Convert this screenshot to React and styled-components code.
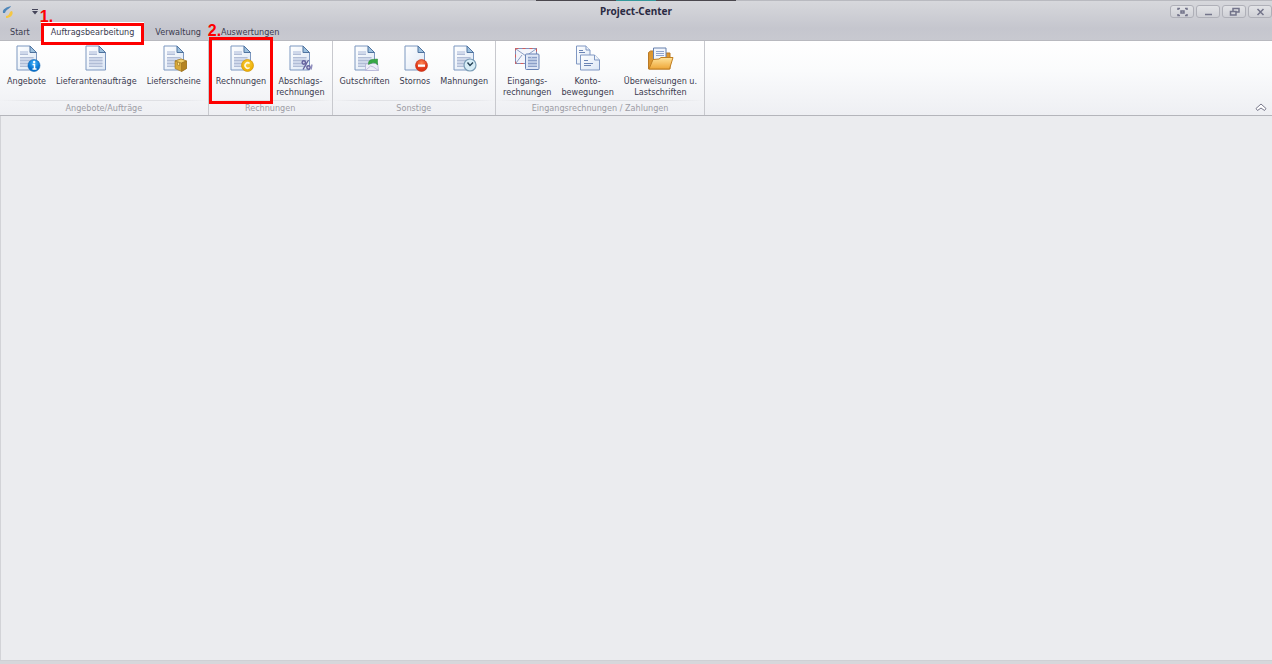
import React, { useState } from 'react';
import styled, { createGlobalStyle, css, ThemeProvider } from 'styled-components';

const theme = {
  text: '#3b3b4f',
  muted: '#9c9ca4',
  line: '#b4b5bb',
  mark: '#fe0000',
  workspace: '#ebecef',
};

const GlobalStyle = createGlobalStyle`
  html, body, #root {
    height: 100%;
    margin: 0;
  }

  * {
    box-sizing: border-box;
  }

  body, button {
    font-family: 'DejaVu Sans Condensed', 'DejaVu Sans', Tahoma, sans-serif;
    font-size: 9px;
    line-height: 11px;
    color: ${theme.text};
  }

  button {
    margin: 0;
    padding: 0;
    border: 0;
    background: none;
  }
`;

const Window = styled.div`
  display: flex;
  flex-direction: column;
  min-height: 100%;
  background: ${(props) => props.theme.workspace};
`;

const Header = styled.header`
  position: relative;
  border-top: 1px solid #b9bac0;
  border-bottom: 1px solid #b8b9bf;
  background: linear-gradient(#d7d8dc, #c5c6ce 70%, #c8c9d0);
`;

const TopStrip = styled.div`
  position: absolute;
  top: -1px;
  left: 50%;
  width: 200px;
  height: 1px;
  margin-left: -100px;
  background: linear-gradient(90deg, #4b484e 40%, #35999c 40%, #35999c 60%, #4b484e 60%);
`;

const TitleBar = styled.div`
  display: grid;
  grid-template-columns: 1fr auto 1fr;
  align-items: center;
  height: 21px;
`;

const QuickAccess = styled.div`
  display: flex;
  align-items: center;
  gap: 18px;
  padding-left: 2px;

  svg {
    display: block;
  }
`;

const Title = styled.h1`
  margin: 0;
  font-family: 'Noto Sans', sans-serif;
  font-size: 10px;
  font-weight: 700;
  color: #2b2b43;
`;

const WindowButtons = styled.div`
  display: flex;
  justify-content: flex-end;
  gap: 2px;
`;

const WindowButton = styled.button`
  display: flex;
  align-items: center;
  justify-content: center;
  width: 24px;
  height: 13px;
  border: 1px solid #afb0b8;
  border-radius: 3px;
  background: linear-gradient(#e2e3e6, #cfd0d6);
`;

const Tabs = styled.nav`
  display: flex;
  height: 18px;
`;

const Tab = styled.button`
  position: relative;
  padding: 2px 10px 0;

  ${(props) => props.$active && css`
    margin: 0 1px -1px;
    background: #fff;
  `}
`;

const Ribbon = styled.div`
  display: flex;
  height: 75px;
  border-bottom: 1px solid ${(props) => props.theme.line};
  background: linear-gradient(#fff, #fafbfc 40%, #eeeff3);
`;

const Group = styled.section`
  display: flex;
  flex-direction: column;
  border-right: 1px solid #c8c9ce;
`;

const Items = styled.div`
  display: flex;
  flex: 1;
  padding: 0 2px;
`;

const GroupName = styled.h2`
  margin: 0;
  padding-top: 2px;
  height: 15px;
  font-size: 9px;
  font-weight: 400;
  text-align: center;
  color: ${(props) => props.theme.muted};
  border-top: 1px solid;
  border-image: linear-gradient(90deg, transparent, #dfe0e4 20%, #dfe0e4 80%, transparent) 1;
`;

const Item = styled.button`
  position: relative;
  display: flex;
  flex-direction: column;
  align-items: center;
  gap: 4px;
  padding: 3px 5px 0;
  white-space: pre-line;
  text-align: center;

  svg {
    display: block;
  }
`;

const Marker = styled.span`
  position: absolute;
  z-index: 1;
  inset: ${(props) => props.$inset};
  border: 3px solid ${(props) => props.theme.mark};
  pointer-events: none;
`;

const MarkerNumber = styled.span`
  position: absolute;
  left: -4px;
  bottom: 100%;
  margin-bottom: 2px;
  font: 700 16px/14px 'Liberation Sans', Arial, sans-serif;
  color: ${(props) => props.theme.mark};
`;

const Collapse = styled.button`
  align-self: flex-end;
  margin: 0 5px 3px auto;

  svg {
    display: block;
  }
`;

const Workspace = styled.main`
  flex: 1;
  border-left: 1px solid #d2d3d7;
`;

const StatusBar = styled.footer`
  height: 4px;
  border-top: 1px solid #cfd0d4;
  background: #d6d7db;
`;

const Page = () => (
  <g>
    <path d="M4 2h13l6.500 6.500V26H4z" fill="url(#paper)" stroke="#7d98c0" />
    <path d="M17 2v6.500h6.500z" fill="#9cc0de" stroke="#4f739f" />
  </g>
);

const Lines = () => (
  <g>
    <path d="M7 7h8v4H7zM7 13h13.500v10H7z" fill="#cfd8ea" />
    <path d="M7 10.500h8M7 13.500h13.500M7 16.500h13.500M7 19.500h13.500M7 22.500h13.500" stroke="#b1bdd6" />
  </g>
);

const badges = {
  info: (
    <g>
      <circle cx="21" cy="21.500" r="6" fill="url(#blue)" stroke="#0b5fae" strokeWidth=".6" />
      <path d="M19.500 20.500h2v4.500m-2 0h4" stroke="#fff" strokeWidth="1.500" fill="none" />
      <circle cx="21.200" cy="18" r="1.200" fill="#fff" />
    </g>
  ),
  box: (
    <g stroke="#9a7220" strokeWidth=".6">
      <path d="m15 17 6-2 5.500 2v7.500l-5 3-6.500-3z" fill="#d8a93a" />
      <path d="m15 17 6.500 2 5-2-5.500-2z" fill="#f2d069" />
      <path d="M21.500 19v8.500l5-3V17z" fill="#b58422" />
      <path d="m17.500 18 2 .7v3l-2-.7z" fill="#ffe58c" />
    </g>
  ),
  coin: (
    <g>
      <circle cx="20.500" cy="21.500" r="6" fill="url(#gold)" stroke="#cf9206" strokeWidth=".7" />
      <path d="M22.600 19.500a2.700 2.700 0 1 0 0 4" stroke="#fff8dc" strokeWidth="1.600" fill="none" />
    </g>
  ),
  percent: (
    <g fill="none" stroke="#62609c" strokeWidth="1.400">
      <path d="m22.500 16-5.500 9.500" />
      <circle cx="17.800" cy="18.500" r="1.700" fill="#cfcee8" />
      <circle cx="22.500" cy="23.500" r="1.700" fill="#cfcee8" />
      <path d="m26 20.500-1 5" stroke="#8d8bbd" />
    </g>
  ),
  credit: (
    <g>
      <path d="m14.500 20 12-1 1 7.500h-13z" fill="#eeedf8" stroke="#b3b2d6" strokeWidth=".8" />
      <path d="m14.500 26.500 5-4.500 3 1 5 3.500" fill="none" stroke="#b3b2d6" strokeWidth=".8" />
      <path d="M17.500 20.500c-.5-3 1-4.500 3.500-5l5.500-.5v6l-2-2c-2-.5-4 0-7 1.500" fill="#37a845" stroke="#238334" strokeWidth=".5" />
    </g>
  ),
  stop: (
    <g>
      <circle cx="20.500" cy="21.500" r="6" fill="url(#red)" stroke="#bd2d12" strokeWidth=".6" />
      <rect x="17" y="20.500" width="7" height="2.300" fill="#fff" />
    </g>
  ),
  clock: (
    <g>
      <circle cx="20" cy="21" r="6" fill="#d7edf7" stroke="#7b9db6" strokeWidth="1.200" />
      <path d="m17.500 18.500 2.500 3 3-3" fill="none" stroke="#234055" strokeWidth="1.400" />
    </g>
  ),
};

const DocumentIcon = ({ badge, blank }) => (
  <svg width="28" height="28" viewBox="0 0 28 28" aria-hidden="true">
    <Page />
    {!blank && <Lines />}
    {badges[badge]}
  </svg>
);

const InvoiceInIcon = () => (
  <svg width="28" height="28" viewBox="0 0 28 28" aria-hidden="true">
    <rect x="2.500" y="4.500" width="21" height="15" fill="#f2f4fb" stroke="#7f90bb" />
    <path d="M2.500 4.500h21v15h-21z" fill="none" stroke="#d75d58" strokeDasharray="3 4" />
    <path d="m3 5 10 7L23 5M3 19l6-8" fill="none" stroke="#8c9fc4" />
    <rect x="12.500" y="10" width="13.500" height="15.500" rx="1" fill="#dfe7f6" stroke="#6681b4" />
    <rect x="15" y="12.500" width="9" height="10.500" fill="#bccae4" />
    <path d="M15 13.500h3m1 0h5m-9 3h9m-9 3h9m-9 3h9" stroke="#8b9fc8" />
  </svg>
);

const AccountIcon = () => (
  <svg width="28" height="28" viewBox="0 0 28 28" aria-hidden="true">
    <g fill="url(#paper)" stroke="#8098c3">
      <path d="M2.500 2h9.500l4 4v14H2.500z" />
      <path d="M12 2v4h4" />
      <path d="M6.500 11h14l5 5v10h-19z" />
      <path d="M20.500 11v5h5" />
    </g>
    <path d="M5 6.500h4m-4 2h6m-1 8h4m-4 3h9m-9 2h7" stroke="#6c85b5" />
  </svg>
);

const FolderIcon = () => (
  <svg width="28" height="28" viewBox="0 0 28 28" aria-hidden="true">
    <path d="M2.500 25V8.500l2-1.500h5l2 2H24v16z" fill="#dd9730" stroke="#b97a27" />
    <path d="M7.500 4h12.500v14H7.500z" fill="#f2f6fd" stroke="#6780ad" />
    <path d="M10 7.500h8m-8 2h8m-8 2h8" stroke="#91a5cc" />
    <path d="m7 15.500 6-.5 2-1.500h12L23.500 25H3z" fill="url(#folder)" stroke="#c18022" />
  </svg>
);

const Gradients = () => (
  <svg width="0" height="0" style={{ position: 'absolute' }} aria-hidden="true">
    <defs>
      <linearGradient id="paper" x2="1" y2="1">
        <stop stopColor="#fff" />
        <stop offset="1" stopColor="#dce7f5" />
      </linearGradient>
      <linearGradient id="folder" x2="0" y2="1">
        <stop stopColor="#ffe39a" />
        <stop offset="1" stopColor="#eea637" />
      </linearGradient>
      <radialGradient id="blue" cy=".3">
        <stop stopColor="#45b6ff" />
        <stop offset="1" stopColor="#0873ce" />
      </radialGradient>
      <radialGradient id="gold" cy=".35">
        <stop stopColor="#f9cf3a" />
        <stop offset="1" stopColor="#efb20a" />
      </radialGradient>
      <radialGradient id="red" cy=".3">
        <stop stopColor="#ff8552" />
        <stop offset="1" stopColor="#df3517" />
      </radialGradient>
    </defs>
  </svg>
);

const tabs = ['Start', 'Auftragsbearbeitung', 'Verwaltung', 'Auswertungen'];

const groups = [
  {
    name: 'Angebote/Aufträge',
    items: [
      { label: 'Angebote', icon: <DocumentIcon badge="info" /> },
      { label: 'Lieferantenaufträge', icon: <DocumentIcon /> },
      { label: 'Lieferscheine', icon: <DocumentIcon badge="box" /> },
    ],
  },
  {
    name: 'Rechnungen',
    items: [
      { label: 'Rechnungen', icon: <DocumentIcon badge="coin" />, step: '2.' },
      { label: 'Abschlags-\nrechnungen', icon: <DocumentIcon badge="percent" /> },
    ],
  },
  {
    name: 'Sonstige',
    items: [
      { label: 'Gutschriften', icon: <DocumentIcon badge="credit" /> },
      { label: 'Stornos', icon: <DocumentIcon badge="stop" blank /> },
      { label: 'Mahnungen', icon: <DocumentIcon badge="clock" /> },
    ],
  },
  {
    name: 'Eingangsrechnungen / Zahlungen',
    items: [
      { label: 'Eingangs-\nrechnungen', icon: <InvoiceInIcon /> },
      { label: 'Konto-\nbewegungen', icon: <AccountIcon /> },
      { label: 'Überweisungen u.\nLastschriften', icon: <FolderIcon /> },
    ],
  },
];

const windowButtons = [
  { label: 'Vollbild', path: 'M1 3V1.500h2m5 0h2V3m0 4v1.500H8m-5 0H1V7m3-3h3v2H4z' },
  { label: 'Minimieren', path: 'M2 7.500h7' },
  { label: 'Wiederherstellen', path: 'M4 4V1.500h6V5H7M1.500 4.500H7V8H1.500z' },
  { label: 'Schließen', path: 'm2.500 2 6 6m0-6-6 6' },
];

const App = () => {
  const [active, setActive] = useState('Auftragsbearbeitung');

  return (
    <ThemeProvider theme={theme}>
      <GlobalStyle />
      <Gradients />
      <Window>
        <Header>
          <TopStrip />
          <TitleBar>
            <QuickAccess>
              <svg width="11" height="12" viewBox="0 0 11 12" aria-hidden="true">
                <path d="M1 7C0 3 5 1 9 0 8 3 4 3 3 7z" fill="#4e86b9" />
                <path d="M4 10c4 0 3-5 6-5 2 3-1 7-6 7z" fill="#f5c743" />
              </svg>
              <button type="button" aria-label="Schnellzugriff">
                <svg width="8" height="6" viewBox="0 0 8 6">
                  <path d="M1 .500h6" stroke="#45455a" />
                  <path d="M1 2h6L4 5.500z" fill="#45455a" />
                </svg>
              </button>
            </QuickAccess>
            <Title>Project-Center</Title>
            <WindowButtons>
              {windowButtons.map((button) => (
                <WindowButton key={button.label} type="button" aria-label={button.label}>
                  <svg width="11" height="10" viewBox="0 0 11 10">
                    <path d={button.path} fill="none" stroke="#73748a" strokeWidth="1.500" />
                  </svg>
                </WindowButton>
              ))}
            </WindowButtons>
          </TitleBar>
          <Tabs>
            {tabs.map((tab) => (
              <Tab key={tab} type="button" $active={tab === active} onClick={() => setActive(tab)}>
                {tab}
                {tab === 'Auftragsbearbeitung' && (
                  <Marker $inset="1px 0 -4px">
                    <MarkerNumber>1.</MarkerNumber>
                  </Marker>
                )}
              </Tab>
            ))}
          </Tabs>
        </Header>
        <Ribbon>
          {groups.map((group) => (
            <Group key={group.name}>
              <Items>
                {group.items.map((item) => (
                  <Item key={item.label} type="button">
                    {item.icon}
                    <span>{item.label}</span>
                    {item.step && (
                      <Marker $inset="-4px -2px">
                        <MarkerNumber>{item.step}</MarkerNumber>
                      </Marker>
                    )}
                  </Item>
                ))}
              </Items>
              <GroupName>{group.name}</GroupName>
            </Group>
          ))}
          <Collapse type="button" aria-label="Menüband einklappen">
            <svg width="12" height="9" viewBox="0 0 12 9">
              <path d="m1 5.500 5-4.500 5 4.500L9.500 7.500 6 5 2.500 7.500z" fill="#fff" stroke="#77778a" />
            </svg>
          </Collapse>
        </Ribbon>
        <Workspace />
        <StatusBar />
      </Window>
    </ThemeProvider>
  );
};

export default App;
